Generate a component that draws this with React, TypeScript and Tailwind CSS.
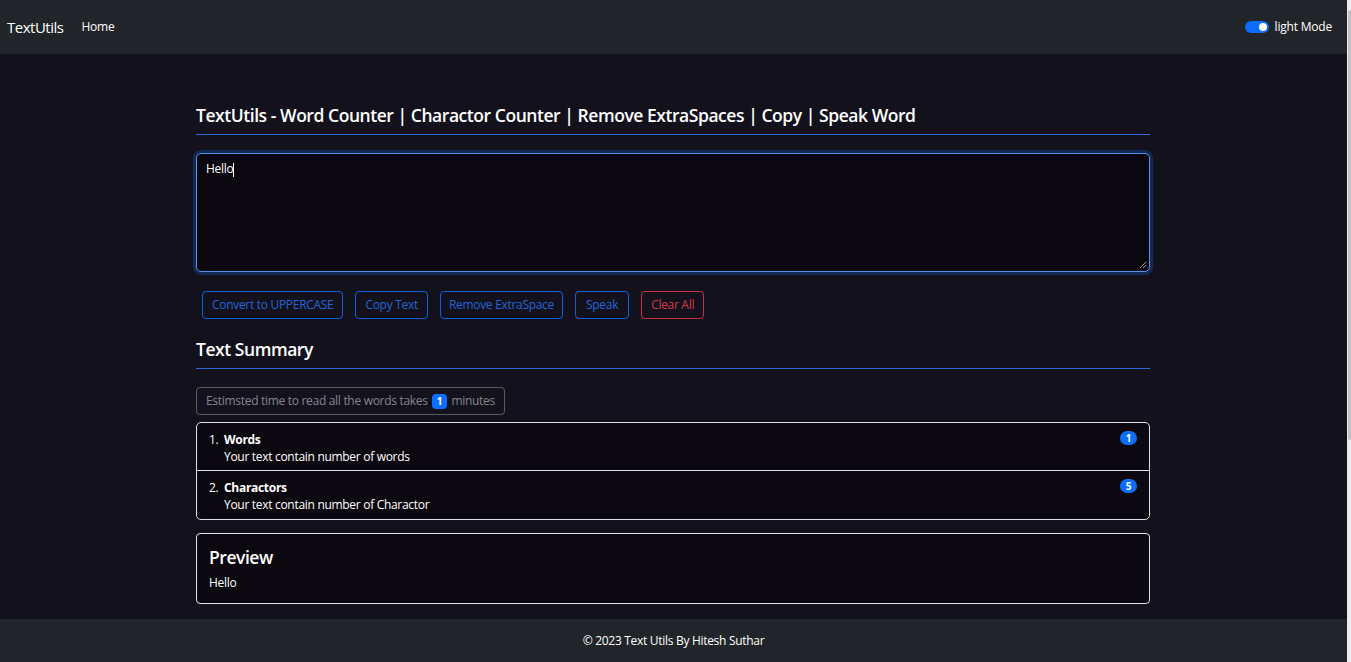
import React from "react";

const font = { fontFamily: '"Open Sans", "Noto Sans", sans-serif' };

function Heading({ children, className = "" }: { children: React.ReactNode; className?: string }) {
  return (
    <div className={`flex flex-col ${className}`}>
      <h4 className="text-[17.5px] font-semibold text-white leading-[24px] tracking-[-0.45px] pb-[7px]">{children}</h4>
      <div className="h-[1px] bg-[#2f68d8]" />
    </div>
  );
}

export default function App() {
  return (
    <div className="flex w-[1351px] h-[662px] overflow-hidden" style={font}>
      <div className="flex flex-col w-[1347px] h-[662px] bg-[#13121c]">
        <nav className="h-[54px] shrink-0 bg-[#212529] flex items-center px-[7px]">
          <span className="text-[15px] text-white mr-[18px] tracking-[-0.5px]">TextUtils</span>
          <span className="text-[12px] text-white tracking-[-0.2px]">Home</span>
          <div className="ml-auto flex items-center gap-[6px] mr-[8px]">
            <div className="w-[24px] h-[12px] rounded-full bg-[#0d6efd] flex items-center justify-end pr-[2px]">
              <div className="w-[8px] h-[8px] rounded-full bg-white" />
            </div>
            <span className="text-[12px] text-white tracking-[-0.2px]">light Mode</span>
          </div>
        </nav>
        <main className="flex-1 pl-[196px] pt-[49px]">
          <div className="w-[954px] flex flex-col">
            <Heading>TextUtils - Word Counter | Charactor Counter | Remove ExtraSpaces | Copy | Speak Word</Heading>
            <div className="mt-[18px] h-[119px] rounded-[5px] border border-[#5b8ee6] bg-[#0c080f] shadow-[0_0_0_3px_rgba(13,110,253,0.25)] px-[9px] pt-[7px] relative text-[12px] leading-[16px] tracking-[-0.3px]">
              <span className="text-white">Hello</span>
              <span className="inline-block w-[1px] h-[14px] bg-white align-middle" />
              <svg className="absolute right-[2px] bottom-[2px]" width="8" height="8" viewBox="0 0 8 8">
                <path d="M1 7L7 1M4 7L7 4" stroke="#9a9a9a" strokeWidth="1" />
              </svg>
            </div>
            <div className="flex gap-[12px] mt-[19px] pl-[6px]">
              {[
                ["Convert to UPPERCASE", "px-[9px]"],
                ["Copy Text", "px-[9px]"],
                ["Remove ExtraSpace", "px-[8px]"],
                ["Speak", "px-[10px]"],
              ].map(([t, p]) => (
                <button key={t} className={`h-[28px] ${p} rounded-[4px] border border-[#0d5fe0] text-[12px] tracking-[-0.3px] text-[#2563d9] bg-transparent`}>
                  {t}
                </button>
              ))}
              <button className="h-[28px] px-[9px] rounded-[4px] border border-[#c9303f] text-[12px] tracking-[-0.3px] text-[#d23a48] bg-transparent">
                Clear All
              </button>
            </div>
            <Heading className="mt-[18px]">Text Summary</Heading>
            <div className="mt-[18px] self-start h-[28px] flex items-center px-[9px] rounded-[4px] border border-[#5a5a62] text-[12px] tracking-[-0.3px] text-[#85858c]">
              Estimsted time to read all the words takes
              <span className="mx-[4px] px-[5px] h-[15px] leading-[15px] rounded-[4px] bg-[#0d6efd] text-white text-[10px] font-bold tracking-normal">1</span>
              minutes
            </div>
            <ol className="mt-[7px] rounded-[5px] border border-[#dee2e6] bg-[#0c080f]">
              {[
                ["Words", "Your text contain number of words", "1"],
                ["Charactors", "Your text contain number of Charactor", "5"],
              ].map(([h, s, n], i) => (
                <li key={h} className={`h-[48px] flex items-start pl-[12px] pr-[12px] pt-[8px] text-[12px] tracking-[-0.3px] ${i === 0 ? "border-b border-[#dee2e6]" : ""}`}>
                  <span className="text-white w-[15px]">{i + 1}.</span>
                  <div className="flex flex-col">
                    <span className="text-white font-bold leading-[17px]">{h}</span>
                    <span className="text-white leading-[18px]">{s}</span>
                  </div>
                  <span className="ml-auto w-[17px] h-[14px] rounded-full bg-[#0d6efd] text-white text-[10px] font-bold tracking-normal flex items-center justify-center">{n}</span>
                </li>
              ))}
            </ol>
            <div className="mt-[13px] h-[71px] rounded-[4px] border border-[#dee2e6] bg-[#0c080f] px-[12px] pt-[11px]">
              <h3 className="text-[17.5px] font-semibold text-white leading-[24px] tracking-[-0.45px]">Preview</h3>
              <p className="text-[12px] tracking-[-0.3px] text-white mt-[5px]">Hello</p>
            </div>
          </div>
        </main>
        <footer className="h-[43px] shrink-0 bg-[#212529] flex items-center justify-center text-[12px] tracking-[-0.3px] text-white">
          © 2023 Text Utils By Hitesh Suthar
        </footer>
      </div>
      <div className="w-[4px] h-[662px] bg-[#ececf0] flex justify-center pt-[10px]">
        <div className="w-[3px] h-[430px] bg-[#c2c2c6] rounded-full" />
      </div>
    </div>
  );
}
